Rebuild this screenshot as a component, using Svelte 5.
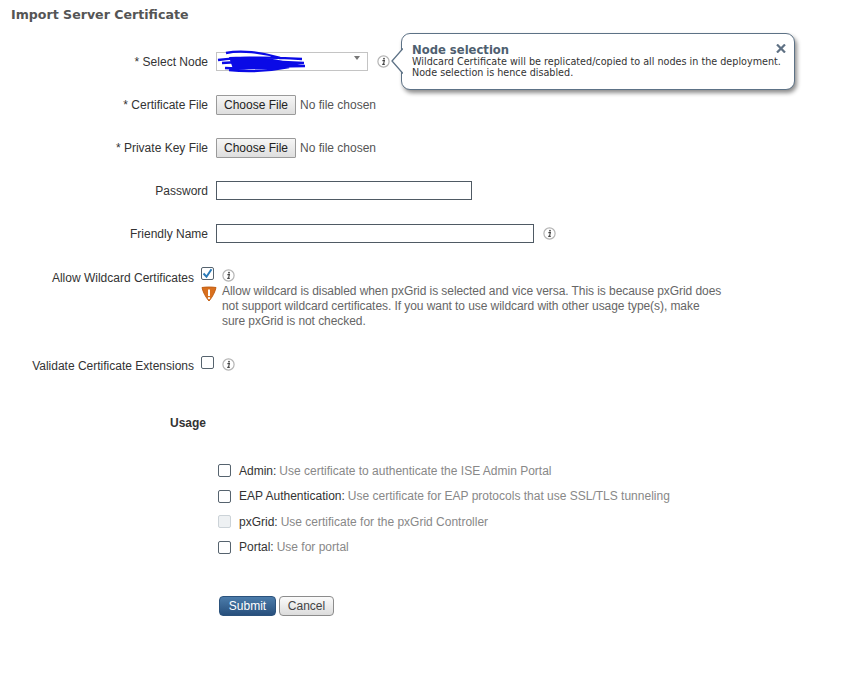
<script>
  const usage = [
    { name: "Admin", hint: "Use certificate to authenticate the ISE Admin Portal" },
    { name: "EAP Authentication", hint: "Use certificate for EAP protocols that use SSL/TLS tunneling" },
    { name: "pxGrid", hint: "Use certificate for the pxGrid Controller", disabled: true },
    { name: "Portal", hint: "Use for portal" },
  ]
</script>

{#snippet info()}
  <svg class="info" width="13" height="13" viewBox="0 0 13 13">
    <circle cx="6.5" cy="6.5" r="5.6" fill="#fff" stroke="#b4b4b4" stroke-width="1.2" />
    <circle cx="7" cy="3.7" r="0.9" fill="#444" />
    <path d="M5.4 5.6h2l-.9 3.6h1M5.2 9.4h2.6" fill="none" stroke="#444" stroke-width="1.1" />
  </svg>
{/snippet}

<div class="page">
  <h1>Import Server Certificate</h1>

  <div class="row first">
    <span class="label">* Select Node</span>
    <div class="select">
      <svg class="scribble" width="92" height="24" viewBox="0 0 92 24">
        <path d="M9 3c14-3 36-1 54 5M1 10c20-3 50-3 84-1M5 13c25-2 55-2 82 0M8 18c22 2 52-2 80-2M12 20c18 2 40 1 60-3" fill="none" stroke="#0a0ae6" stroke-width="2.4" />
        <path d="M12 7c20-1 38 0 54 4l20 3-28 5H16z" fill="#0a0ae6" />
      </svg>
      <span class="caret"></span>
    </div>
    {@render info()}
  </div>

  <div class="row">
    <span class="label">* Certificate File</span>
    <button class="choose">Choose File</button>
    <span class="nofile">No file chosen</span>
  </div>

  <div class="row">
    <span class="label">* Private Key File</span>
    <button class="choose">Choose File</button>
    <span class="nofile">No file chosen</span>
  </div>

  <div class="row">
    <span class="label">Password</span>
    <div class="input pw"></div>
  </div>

  <div class="row">
    <span class="label">Friendly Name</span>
    <div class="input fn"></div>
    {@render info()}
  </div>

  <div class="check-row wild">
    <span class="label short">Allow Wildcard Certificates</span>
    <div class="check-col">
      <div class="check-line">
        <span class="box">
          <svg width="13" height="13" viewBox="0 0 13 13">
            <path d="M2.5 6.5l3 3.2 5-7.5" fill="none" stroke="#2a7ab8" stroke-width="2" />
          </svg>
        </span>
        {@render info()}
      </div>
      <div class="warning">
        <svg width="16" height="16" viewBox="0 0 16 16">
          <path d="M1 1.5c4-.6 10-.6 14 0c-1 4.500-3.500 9.500-7 13.500c-3.500-4-6-9-7-13.500z" fill="#d9701e" stroke="#c25f14" stroke-linejoin="round" />
          <path d="M8 3.500v6.500" stroke="#fff" stroke-width="2" />
          <circle cx="8" cy="12.200" r="1.100" fill="#fff" />
        </svg>
        <p>Allow wildcard is disabled when pxGrid is selected and vice versa. This is because pxGrid does<br />not support wildcard certificates. If you want to use wildcard with other usage type(s), make<br />sure pxGrid is not checked.</p>
      </div>
    </div>
  </div>

  <div class="check-row validate">
    <span class="label short">Validate Certificate Extensions</span>
    <div class="check-line">
      <span class="box"></span>
      {@render info()}
    </div>
  </div>

  <div class="usage-title">Usage</div>

  <div class="usage">
    {#each usage as u}
      <div class="usage-row">
        <span class="box" class:off={u.disabled}></span>
        <span class="uname">{u.name}:</span>
        <span class="uhint">{u.hint}</span>
      </div>
    {/each}
  </div>

  <div class="actions">
    <button class="submit">Submit</button>
    <button class="cancel">Cancel</button>
  </div>

  <div class="callout">
    <svg class="arrow" width="12" height="26" viewBox="0 0 12 26">
      <path d="M12 0.500L1 13l11 12.500" fill="#fff" stroke="#5d7286" stroke-width="1.300" />
    </svg>
    <svg class="close" width="10" height="9" viewBox="0 0 10 9">
      <path d="M1 0.500l8 8M9 0.500l-8 8" stroke="#5f7184" stroke-width="2.200" />
    </svg>
    <div class="ctitle">Node selection</div>
    <div class="ctext">Wildcard Certificate will be replicated/copied to all nodes in the deployment.<br />Node selection is hence disabled.</div>
  </div>
</div>

<style>
  :global(body) {
    margin: 0;
    background: #fff;
  }
  .page {
    position: relative;
    width: 861px;
    height: 678px;
    overflow: hidden;
    font-family: "Liberation Sans", Arial, sans-serif;
    font-size: 12px;
    color: #333;
  }
  h1 {
    margin: 0;
    padding: 6px 0 0 11px;
    height: 23px;
    font-family: "DejaVu Sans", sans-serif;
    font-size: 12.6px;
    line-height: 18px;
    font-weight: bold;
    color: #555;
  }
  .row {
    display: flex;
    align-items: center;
    height: 43px;
  }
  .first {
    margin-top: 11px;
  }
  .label {
    width: 208px;
    flex: none;
    margin-right: 8px;
    text-align: right;
    color: #333;
  }
  .select {
    position: relative;
    width: 150px;
    height: 17px;
    border: 1px solid #c4c4c4;
    margin-right: 9px;
  }
  .scribble {
    position: absolute;
    left: 0;
    top: -3px;
  }
  .caret {
    position: absolute;
    right: 7px;
    top: 3px;
    border: 3.5px solid transparent;
    border-top: 4px solid #777;
  }
  .info {
    flex: none;
    margin-top: 0;
  }
  .check-line .info {
    margin-top: 2px;
  }
  .choose {
    width: 80px;
    height: 20px;
    padding: 0;
    border: 1px solid #9a9a9a;
    border-radius: 1px;
    background: linear-gradient(#f6f6f6, #dedede);
    font: 12px "Liberation Sans", Arial, sans-serif;
    color: #222;
  }
  .nofile {
    margin-left: 4px;
    color: #555;
  }
  .input {
    height: 17px;
    border: 1px solid #4f5a64;
  }
  .pw {
    width: 254px;
  }
  .fn {
    width: 316px;
    margin-right: 9px;
  }
  .check-row {
    display: flex;
  }
  .wild {
    height: 91px;
    margin-top: 13px;
  }
  .validate {
    height: 42px;
  }
  .short {
    width: 194px;
    margin-right: 7px;
    line-height: 15px;
    padding-top: 3px;
  }
  .validate .short {
    padding-top: 0;
  }
  .check-line {
    display: flex;
    align-items: flex-start;
    gap: 8px;
    height: 15px;
  }
  .wild .check-line {
    margin-top: -1px;
  }
  .validate .check-line {
    margin-top: -3px;
  }
  .box {
    display: block;
    box-sizing: border-box;
    width: 13px;
    height: 13px;
    flex: none;
    border: 1px solid #56636e;
    border-radius: 2px;
    background: #fff;
  }
  .box svg {
    display: block;
    margin: -1px;
  }
  .box.off {
    border-color: #ccd3d8;
    background: #eef1f3;
  }
  .warning {
    display: flex;
    gap: 5px;
    width: 525px;
    margin-top: 2px;
    white-space: nowrap;
  }
  .warning svg {
    flex: none;
    margin-top: 2px;
  }
  .warning p {
    margin: 0;
    line-height: 15px;
    color: #666;
    letter-spacing: -0.065px;
  }
  .usage-title {
    padding-left: 170px;
    font-weight: bold;
    line-height: 15px;
    margin-top: 15px;
  }
  .usage {
    margin-top: 27px;
    padding-left: 218px;
  }
  .usage-row {
    display: flex;
    align-items: center;
    height: 25.5px;
  }
  .usage-row .box {
    margin-right: 8px;
  }
  .uname {
    margin-right: 3px;
    color: #333;
  }
  .uhint {
    color: #888;
  }
  .actions {
    display: flex;
    gap: 3px;
    margin-top: 36px;
    padding-left: 219px;
  }
  .actions button {
    height: 20px;
    padding: 0;
    border-radius: 4px;
    font: 12px "Liberation Sans", Arial, sans-serif;
  }
  .submit {
    width: 57px;
    border: 1px solid #2b527c;
    background: linear-gradient(#4c7cab, #274f7c);
    color: #fff;
  }
  .cancel {
    width: 55px;
    border: 1px solid #8c8c8c;
    background: linear-gradient(#fbfbfb, #dcdcdc);
    color: #444;
  }
  .callout {
    position: absolute;
    left: 401px;
    top: 33px;
    box-sizing: border-box;
    width: 394px;
    height: 57px;
    padding: 10px 10px;
    border: 1px solid #5d7286;
    border-radius: 9px;
    background: #fff;
    box-shadow: 2px 3px 4px rgba(0, 0, 0, 0.45);
    font-family: "DejaVu Sans", sans-serif;
    font-size: 9.65px;
    line-height: 11px;
    color: #333;
    white-space: nowrap;
  }
  .arrow {
    position: absolute;
    left: -11px;
    top: 14px;
  }
  .close {
    position: absolute;
    right: 8px;
    top: 10px;
  }
  .ctitle {
    font-size: 11.6px;
    line-height: 12px;
    font-weight: bold;
    color: #4f5f70;
  }
</style>
